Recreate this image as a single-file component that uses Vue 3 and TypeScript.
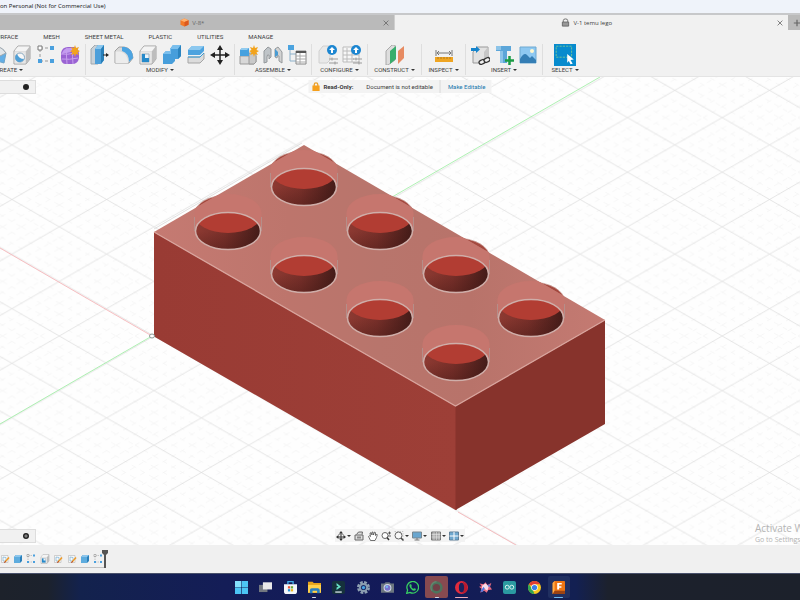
<script setup lang="ts">
interface ToolGroup {
  name: string
  icons: string[]
}

const menus: string[] = ['SURFACE', 'MESH', 'SHEET METAL', 'PLASTIC', 'UTILITIES', 'MANAGE']

const groups: ToolGroup[] = [
  { name: 'CREATE', icons: ['revolve', 'hole', 'pattern', 'form'] },
  { name: 'MODIFY', icons: ['pushPull', 'fillet', 'shell', 'combine', 'split', 'move'] },
  { name: 'ASSEMBLE', icons: ['component', 'joint', 'bom'] },
  { name: 'CONFIGURE', icons: ['configure', 'configTable'] },
  { name: 'CONSTRUCT', icons: ['plane'] },
  { name: 'INSPECT', icons: ['measure'] },
  { name: 'INSERT', icons: ['derive', 'fastener', 'canvas'] },
  { name: 'SELECT', icons: ['select'] },
]

const box =
  '<path d="M2 6L6 1H18V14L14 19H2Z" fill="#d8d8d8" stroke="#a2a2a2"/><path d="M2.500 6.500H13.500V18.500H2.500Z" fill="#e6e6e6"/><path d="M14 6L18 1V14L14 19Z" fill="#bdbdbd"/><path d="M2.500 6L6 1.500H17.500L14 6Z" fill="#f4f4f4"/>'
const star =
  '<path d="M15 0L16 3L19 2L17.500 5L20 6L17.500 7.500L19 10L16 9L15 12L14 9L11 10L12.500 7.500L10 6L12.500 5L11 2L14 3Z" fill="#f2a31c"/>'
const badge =
  '<circle cx="14" cy="5" r="5" fill="#1c86d1"/><path d="M14 2L17 5H15V8H13V5H11Z" fill="#fff"/><path d="M11 14H20M11 18H20M14 12.500V15.500M17 16.500V19.500" stroke="#9b9b9b"/>'

const toolIcons: Record<string, string> = {
  revolve:
    '<path d="M0 5Q12-1 18 8L16 18L9 16Q8 11 0 13Z" fill="#62aee6" stroke="#6ea3c8"/><path d="M0 3Q12-2 18 8L12 11Q8 5 0 7Z" fill="#e1e5e8" stroke="#9aa4ab"/>',
  hole: box + '<circle cx="8" cy="12.500" r="4.500" fill="#f7f7f7" stroke="#8aa9c0"/><path d="M5 9A4.500 4.500 0 1 0 12 14Q7 14 5 9Z" fill="#4f9fd6"/>',
  pattern:
    '<path d="M4 4V17M4 3H16M4 16H16" stroke="#999" fill="none" stroke-dasharray="3 2"/><path d="M2 1H6V5H2Z" fill="#fff" stroke="#777"/><path d="M14 1H18V5H14ZM2 14H6V18H2ZM14 14H18V18H14Z" fill="#4aa0de"/>',
  form:
    '<path d="M1 8Q2 2 8 2H14Q19 3 19 9V13Q18 19 12 19H6Q1 19 1 13Z" fill="#9a63d3"/><path d="M2 8Q4 3 9 3H13L11 7Q6 8 2 9Z" fill="#c39bef"/><path d="M1 9Q8 10 14 8Q17 7 18 6M2 14Q9 15 18 13M7 3Q6 11 7 19M13 3Q12 12 13 19" fill="none" stroke="#c7a0ee"/>' + star,
  pushPull:
    '<path d="M1 4L5 0H11V15L8 19H1Z" fill="#c9d1d7" stroke="#a0a8ae"/><path d="M5 4L8 0H14V15L11 19H5Z" fill="#4c9fda"/><path d="M5 4L8 0H14L11 4Z" fill="#8cc8ef"/><path d="M11 4L14 0V15L11 19Z" fill="#277fb9"/><path d="M13 10H17" stroke="#222"/><path d="M16 8L19 10L16 12Z" fill="#222"/>',
  fillet:
    '<path d="M1 6L5 2H10Q18 3 19 13L15 18H1Z" fill="#d9d9d9" stroke="#a0a0a0"/><path d="M8 2H11Q19 4 19 13L15 17Q15 8 8 6Z" fill="#4ba4e2"/><path d="M1.500 6.500H6Q14 8 14 18H1.500Z" fill="#ececec"/>',
  shell: box + '<path d="M4 9H11V17H4Z" fill="#e8f4fc" stroke="#9fb3c2"/><path d="M4 9H7V13L11 13V17H4Z" fill="#2589ca"/>',
  combine:
    '<path d="M1 9L4 6H8V4L11 0H19V11L16 14H13V16L10 19H1Z" fill="#479edb"/><path d="M1 9L4 6H8V4L11 0H19L16 4H9V9Z" fill="#7bbfed"/><path d="M16 4L19 0V11L16 14Z" fill="#2c84bf"/>',
  split:
    '<path d="M2 5L6 1H18V6L14 10H2Z" fill="#4da3df"/><path d="M2 5L6 1H18L14 5Z" fill="#8cc8ef"/><path d="M2 12H14L18 8V14L14 18H2Z" fill="#dcdcdc" stroke="#a5a5a5"/><path d="M2 12H14L18 8" stroke="#319bd8" fill="none"/>',
  move:
    '<path d="M10 3V17M3 10H17" stroke="#222" stroke-width="1.500"/><path d="M10 0L13 5H7ZM10 20L13 15H7ZM0 10L5 7V13ZM20 10L15 7V13Z" fill="#222"/>',
  component:
    '<path d="M1 11H17V17L15 19H1Z" fill="#d8d8d8" stroke="#9b9b9b"/><path d="M10 8H17V17L15 19H10Z" fill="#c9c9c9" stroke="#999"/><path d="M1 5L3 3H10V11H1Z" fill="#46a1df"/><path d="M1 5L3 3H10L8 5Z" fill="#91cbef"/>' + star,
  joint:
    '<path d="M1 6L5 2L8 4V12L6 14V10Q4 9 4 12V17L1 18Z" fill="#bfc4c8" stroke="#95999c"/><path d="M12 4L15 2L19 7V18L16 16V11Q14 9 14 13L12 12Z" fill="#d2d2d2" stroke="#95999c"/><path d="M12 4L15 7V10L12 12Z" fill="#499bd2"/>',
  bom: '<path d="M1 0H7V5H1Z" fill="#4ba3df"/><path d="M3 5V16H9M3 9H9" stroke="#8db1ca" fill="none"/><path d="M9 6H19V19H9Z" fill="#fff" stroke="#888"/><path d="M9 6H19V8H9Z" fill="#555"/><path d="M9 11H19M9 14H19M9 17H19M13 8V19" stroke="#aaa"/>',
  configure: '<path d="M1 6L5 1H12V15L9 18H1Z" fill="#e9e9e9" stroke="#d0d0d0"/>' + badge,
  configTable: '<path d="M1 2H17V17H1Z" fill="#f7f7f7" stroke="#bbb"/><path d="M1 6H17M1 10H17M1 14H12M5 3V17M10 3V17" stroke="#bbb"/>' + badge,
  plane:
    '<path d="M1 6L7 0H10V15L3 20H1Z" fill="#ddd" stroke="#aaa"/><path d="M5 6L11 1V14L5 19Z" fill="#38ae6c"/><path d="M13 6L19 1V13L13 19Z" fill="#e78b62"/>',
  measure:
    '<path d="M2 5V11M18 5V11M3 8H17M5 6L3 8L5 10M15 6L17 8L15 10" fill="none" stroke="#777"/><path d="M1 12H19V17H1Z" fill="#efa522"/><path d="M4 12V14M7 12V14M10 12V14M13 12V14M16 12V14" stroke="#b47b1b"/>',
  derive:
    '<path d="M3 7L7 2H18V14L15 18H3Z" fill="#e2e2e2" stroke="#999"/><path d="M14 7L18 2V14L14 18Z" fill="#c6c6c6"/><path d="M1 3H6V1L10 4.500L6 8V6H1Z" fill="#1684cc"/><g fill="#f1f1f1" stroke="#333" stroke-width="1.300"><rect x="9" y="15" width="6" height="4" rx="2" transform="rotate(-25 12 17)"/><rect x="14" y="13" width="6" height="4" rx="2" transform="rotate(-25 17 15)"/></g>',
  fastener:
    '<path d="M2 1H17V6H13V18H6V6H2Z" fill="#5ca6d9"/><path d="M2 1H7V5H2ZM6 6H9V18H6Z" fill="#8dc4e8"/><path d="M15.500 11V20M11 15.500H20" stroke="#1a9c45" stroke-width="2.500"/>',
  canvas:
    '<path d="M2 2H18V18H2Z" fill="#8ec8f1" stroke="#6ea9d1"/><circle cx="14" cy="6" r="2" fill="#fff7cf"/><path d="M2 14Q6 7 9 10L12 13L14 11L18 15V18H2Z" fill="#347eb5"/>',
  select:
    '<path d="M0 0H20V20H0Z" fill="#078bce"/><path d="M2 2H16V12H2Z" fill="none" stroke="#8ad18a" stroke-width="0.700" stroke-dasharray="2 1"/><path d="M12 9L18 14L15 14.500L17 18L15 18.500L13.500 15.500L12 17Z" fill="#fff"/>',
}

const timeline: string[] = ['sketch', 'extrude', 'pattern', 'shell', 'sketch', 'sketch', 'extrude', 'pattern']
const timelineIcons: Record<string, string> = {
  sketch: '<path d="M3 3H16V17H3Z" fill="#f8f8f8" stroke="#aaa"/><path d="M6 6V14H12V7Z" fill="none" stroke="#4b97c9"/><path d="M10 16L18 7" stroke="#ef9a25" stroke-width="3"/><path d="M9 18L11 14" stroke="#b4472d" stroke-width="2"/>',
  extrude: '<path d="M2 6L6 2H18V14L14 18H2Z" fill="#2a80bb"/><path d="M2 6H14V18H2Z" fill="#5eacde"/><path d="M2 6L6 2H18L14 6Z" fill="#8dc6ec"/>',
  pattern: toolIcons.pattern,
  shell: toolIcons.shell,
}

interface ViewTool {
  label: string
  icon: string
  menu: boolean
}

const viewTools: ViewTool[] = [
  { label: 'Orbit', menu: true, icon: '<path d="M10 2V18M2 12H18" fill="none" stroke="#333" stroke-width="2"/><path d="M10 0L14 5H6ZM10 20L14 15H6ZM0 12L5 8V16ZM20 12L15 8V16Z" fill="#333"/><path d="M4 8Q10 3 16 8" fill="none" stroke="#777" stroke-width="1.500"/>' },
  { label: 'Look at', menu: false, icon: '<path d="M2 8H18V18H2ZM5 7L9 2H17L16 7" fill="#ddd" stroke="#666" stroke-width="2"/><path d="M6 11H14V15H6Z" fill="#888"/>' },
  { label: 'Pan', menu: false, icon: '<path d="M5 19L1 11Q2 8 5 11L4 4Q6 1 8 8V2Q10-1 11 8L13 2Q16 1 15 9L17 6Q20 6 17 13L14 19Z" fill="#fff" stroke="#444" stroke-width="1.500"/>' },
  { label: 'Zoom', menu: false, icon: '<circle cx="8" cy="9" r="6" fill="#fff" stroke="#666" stroke-width="2"/><path d="M12 13L16 18" stroke="#333" stroke-width="3"/><path d="M17 1V7M14 4H20M14 10H20" stroke="#333" stroke-width="1.500"/>' },
  { label: 'Fit', menu: true, icon: '<path d="M1 1H18V18" fill="none" stroke="#999" stroke-dasharray="3 2"/><circle cx="9" cy="9" r="7" fill="#f7f7f7" stroke="#666" stroke-width="2"/><path d="M14 14L19 19" stroke="#444" stroke-width="3"/>' },
  { label: 'Display settings', menu: true, icon: '<path d="M1 2H19V14H1Z" fill="#69a6cf" stroke="#78868f" stroke-width="2"/><path d="M10 14V18M5 18H15" stroke="#777" stroke-width="2"/>' },
  { label: 'Grid and snaps', menu: true, icon: '<path d="M1 2H19V18H1Z" fill="#aaa" stroke="#777" stroke-width="2"/><path d="M6 2V18M11 2V18M16 2V18M1 7H19M1 12H19" stroke="#eee"/>' },
  { label: 'Viewports', menu: true, icon: '<path d="M1 2H19V18H1Z" fill="#6fa8cf" stroke="#5e7e97" stroke-width="2"/><path d="M10 2V18M1 10H19" stroke="#fff" stroke-width="2"/>' },
]

interface TaskApp {
  label: string
  icon: string
  state: string
}

const apps: TaskApp[] = [
  { label: 'Start', state: '', icon: '<path d="M0 0H9.500V9.500H0ZM10.500 0H20V9.500H10.500ZM0 10.500H9.500V20H0ZM10.500 10.500H20V20H10.500Z" fill="#4cc5f4"/><path d="M0 0H9.500V9.500H0Z" fill="#84e0fc"/>' },
  { label: 'Task view', state: '', icon: '<path d="M0 6H13V17H0Z" fill="#727780"/><path d="M6 2H20V13H6Z" fill="#e9e9e9"/>' },
  { label: 'Store', state: '', icon: '<path d="M6 5V1H14V5" fill="none" stroke="#43afe8" stroke-width="2"/><path d="M0 5H20V16Q20 20 16 20H4Q0 20 0 16Z" fill="#f4f7fa"/><path d="M6 8H9.500V11.500H6Z" fill="#e95536"/><path d="M10.500 8H14V11.500H10.500Z" fill="#69a83a"/><path d="M6 12.500H9.500V16H6Z" fill="#2994d6"/><path d="M10.500 12.500H14V16H10.500Z" fill="#f1b61b"/>' },
  { label: 'Files', state: 'open', icon: '<path d="M0 1H7L9 3H20V18H0Z" fill="#e5a21b"/><path d="M0 6H20V18H0Z" fill="#ffd14c"/><path d="M3 19V14Q3 11 6 11H15Q18 11 18 14V19H14V15H7V19Z" fill="#287fc1"/>' },
  { label: 'Filmora', state: '', icon: '<rect width="20" height="20" rx="3" fill="#15313c"/><path d="M7 3L14 9L7 14V10L10 9L7 7Z" fill="#67e0c7"/><path d="M5 17H15" stroke="#d9e6ea" stroke-width="2"/>' },
  { label: 'Settings', state: '', icon: '<circle cx="10" cy="10" r="8" fill="none" stroke="#8fa1b3" stroke-width="4" stroke-dasharray="4.200 2.080"/><circle cx="10" cy="10" r="7" fill="#8b9eb0"/><circle cx="10" cy="10" r="4" fill="#1a2b68"/><circle cx="10" cy="10" r="2.500" fill="#48a5e3"/>' },
  { label: 'Camera', state: '', icon: '<path d="M0 4H5L7 2H13L15 4H20V18H0Z" fill="#6c7680"/><circle cx="10" cy="10.500" r="6" fill="#d6dce5"/><circle cx="10" cy="10.500" r="4.500" fill="#7870cb"/><circle cx="9" cy="9" r="2" fill="#77b4ed"/>' },
  { label: 'WhatsApp', state: '', icon: '<path d="M1 19L2.500 14A9 9 0 1 1 6 17.500Z" fill="none" stroke="#37cf62" stroke-width="2"/><path d="M6 5L8 5L9 8L8 9Q9 12 12 12L13 11L15 12L15 14Q11 17 7 11Q4 7 6 5Z" fill="#37cf62"/>' },
  { label: 'Opera GX', state: 'alert', icon: '<circle cx="10" cy="10" r="7.500" fill="#713f46" stroke="#4d745d" stroke-width="4"/><path d="M10 1A9 9 0 0 0 3 15" stroke="#64866e" stroke-width="2" fill="none"/>' },
  { label: 'Opera', state: 'running', icon: '<ellipse cx="10" cy="10" rx="10" ry="10" fill="#e32b3c"/><path d="M12 1Q20 3 19 12Q17 19 11 19Q16 10 12 1Z" fill="#b61b30"/><ellipse cx="10" cy="10" rx="4" ry="7.500" fill="#18225c"/>' },
  { label: 'Paint brush', state: '', icon: '<path d="M1 4L7 5L10 2L13 6L19 3L17 9L20 13L14 14L12 18L8 15L2 18L4 12L0 9L4 8Z" fill="#ee6c80"/><path d="M5 7L10 4L15 8L13 15L8 12L4 14Z" fill="#f7dce9"/><path d="M2 16L7 9L9 12L5 17ZM13 7L17 5L16 10Z" fill="#4d78df"/>' },
  { label: 'Arduino', state: '', icon: '<rect width="20" height="20" rx="3" fill="#2b9aa1"/><circle cx="6.500" cy="9.500" r="3" fill="none" stroke="#d9f4f1" stroke-width="1.500"/><circle cx="13.500" cy="9.500" r="3" fill="none" stroke="#d9f4f1" stroke-width="1.500"/>' },
  { label: 'Chrome', state: '', icon: '<circle cx="10" cy="10" r="10" fill="#f8c71f"/><path d="M10 10L1.300 5A10 10 0 0 1 18.700 5H10Z" fill="#e43d31"/><path d="M1.300 5L7 13L10 20A10 10 0 0 1 1.300 5Z" fill="#31a653"/><circle cx="10" cy="10" r="5" fill="#fff"/><circle cx="10" cy="10" r="4" fill="#3b7ee8"/>' },
  { label: 'Fusion', state: 'active', icon: '<path d="M1 3L4 0H19Q20 0 20 2V20H1Z" fill="#ed7513"/><path d="M1 3L4 0V17L1 20Z" fill="#ffad46"/><path d="M4 15H20V20H1Z" fill="#9b4313"/><path d="M8 3H15V5.500H11V8H14.500V10.500H11V13H8Z" fill="#fff"/>' },
]

const studs: [number, number][] = [
  [304, 187],
  [228, 231],
  [380, 231],
  [304, 274],
  [456, 274],
  [380, 318],
  [531, 318],
  [456, 362],
]
</script>

<template>
  <div class="app">
    <header class="title">on Personal (Not for Commercial Use)</header>

    <nav class="documents">
      <div class="doc inactive">
        <svg class="doc-icon" viewBox="0 0 20 20"><path d="M1 5L10 1L19 5V15L10 19L1 15Z" fill="#f37a28" /><path d="M1 5L10 1L19 5L10 9Z" fill="#ffb16f" /><path d="M10 9L19 5V15L10 19Z" fill="#db5920" /></svg>
        <span>V-8*</span>
        <button class="close" aria-label="Close V-8"><svg viewBox="0 0 10 10"><path d="M2 2L8 8M8 2L2 8" /></svg></button>
      </div>
      <div class="doc current">
        <svg class="doc-icon" viewBox="0 0 20 20"><path d="M5 9V6Q5 2 10 2T15 6V9" fill="none" stroke="#666" stroke-width="2" /><path d="M3 9H17V18H3Z" fill="#999" stroke="#666" stroke-width="2" /></svg>
        <span>V-1 temu lego</span>
        <button class="close" aria-label="Close V-1 temu lego"><svg viewBox="0 0 10 10"><path d="M2 2L8 8M8 2L2 8" /></svg></button>
      </div>
      <button class="new-doc" aria-label="New document"><svg viewBox="0 0 10 10"><path d="M5 1V9M1 5H9" /></svg></button>
    </nav>

    <section class="ribbon">
      <div class="menus">
        <button v-for="menu in menus" :key="menu">{{ menu }}</button>
      </div>
      <div class="groups">
        <div v-for="group in groups" :key="group.name" class="group" :class="group.name.toLowerCase()">
          <div class="tools">
            <button v-for="icon in group.icons" :key="icon" class="tool" :aria-label="icon">
              <svg viewBox="0 0 20 20" v-html="toolIcons[icon]"></svg>
            </button>
          </div>
          <button class="group-name">{{ group.name }}<i class="caret"></i></button>
        </div>
      </div>
    </section>

    <main class="viewport">
      <svg class="scene" viewBox="0 77 800 468" preserveAspectRatio="xMidYMid slice">
        <defs>
          <pattern id="grid" x="154" y="336" width="94.700" height="54.600" patternUnits="userSpaceOnUse">
            <g fill="none" stroke="#f4f4f4" stroke-width="0.800" stroke-dasharray="5 5">
              <path d="M0 10.920L18.940 0M0 21.840L37.880 0M0 32.760L56.820 0M0 43.680L75.760 0M18.940 54.600L94.700 10.920M37.880 54.600L94.700 21.840M56.820 54.600L94.700 32.760M75.760 54.600L94.700 43.680" />
              <path d="M75.760 0L94.700 10.920M56.820 0L94.700 21.840M37.880 0L94.700 32.760M18.940 0L94.700 43.680M0 10.920L75.760 54.600M0 21.840L56.820 54.600M0 32.760L37.880 54.600M0 43.680L18.940 54.600" />
            </g>
            <path d="M0 0L94.700 54.600M0 54.600L94.700 0" fill="none" stroke="#dadada" stroke-width="0.700" />
          </pattern>
          <linearGradient id="roof" x1="0" y1="0" x2="1" y2="0">
            <stop offset="0" stop-color="#c57a72" />
            <stop offset="0.300" stop-color="#bd756c" />
            <stop offset="0.500" stop-color="#b8756c" />
            <stop offset="0.700" stop-color="#b8736a" />
            <stop offset="1" stop-color="#c47a72" />
          </linearGradient>
          <linearGradient id="wall" x1="0" y1="0" x2="1" y2="0">
            <stop offset="0" stop-color="#8e3a32" />
            <stop offset="0.450" stop-color="#79302a" />
            <stop offset="1" stop-color="#421b18" />
          </linearGradient>
          <linearGradient id="wall-shade" x1="0" y1="0" x2="0" y2="1">
            <stop offset="0.500" stop-color="#3a1512" stop-opacity="0" />
            <stop offset="1" stop-color="#3a1512" stop-opacity="0.350" />
          </linearGradient>
          <linearGradient id="left-face" x1="0" y1="0" x2="1" y2="0">
            <stop offset="0" stop-color="#993b34" />
            <stop offset="1" stop-color="#9d3f37" />
          </linearGradient>
          <clipPath id="roof-clip"><path d="M304 145L605 320L455.500 406L154 232Z" /></clipPath>
          <clipPath id="hole-clip"><ellipse rx="32.500" ry="18.500" /></clipPath>
        </defs>
        <rect y="77" width="800" height="468" fill="#fefefe" />
        <rect y="77" width="800" height="468" fill="url(#grid)" />
        <path d="M0 248L152 336M458 512L516 545" stroke="#f6aeb2" stroke-width="0.800" fill="none" />
        <path d="M0 424L152 336M380 204L600 77" stroke="#9aee9f" stroke-width="0.800" fill="none" />

        <path d="M154 229L302 143" stroke="#d4d4d4" stroke-width="0.700" />
        <g v-for="(stud, i) in studs" :key="`rim-${i}`" :transform="`translate(${stud[0]} ${stud[1]})`">
          <ellipse cy="-17" rx="33.500" ry="19" fill="#a4493f" stroke="#c99d97" stroke-width="0.700" />
        </g>
        <path d="M154 232L455.500 406H457V509.500L455.500 510L154 336.500Z" fill="url(#left-face)" />
        <path d="M455.500 406L605 320V424L455.500 510Z" fill="#87332c" />
        <path d="M304 145L605 320L455.500 406L154 232Z" fill="url(#roof)" />
        <g clip-path="url(#roof-clip)">
          <g v-for="(stud, i) in studs" :key="`stud-${i}`" :transform="`translate(${stud[0]} ${stud[1]})`">
            <path d="M-33.500 0V-18A33.500 19 0 0 1 33.500 -18V0Z" fill="#c6766e" />
            <path d="M-33.500 0V-14M33.500 0V-14" stroke="#b58e89" />
          </g>
        </g>
        <g v-for="(stud, i) in studs" :key="`hole-${i}`" :transform="`translate(${stud[0]} ${stud[1]})`">
          <g clip-path="url(#hole-clip)">
            <ellipse rx="33" ry="19" fill="url(#wall)" />
            <ellipse rx="33" ry="19" fill="url(#wall-shade)" />
            <ellipse cy="-17" rx="34" ry="19" fill="#b23d33" />
          </g>
          <ellipse rx="32.500" ry="18.500" fill="none" stroke="#cfaea9" stroke-width="1.500" />
        </g>
        <path d="M154 232L455.500 406L605 320" fill="none" stroke="#d8a39c" stroke-width="1.300" />
        <ellipse cx="152" cy="336" rx="2.500" ry="2" fill="#fff" stroke="#8a9995" />
      </svg>

      <aside class="panel top"><button aria-label="Collapse browser"><svg viewBox="0 0 10 10"><circle cx="5" cy="5" r="5" /></svg></button></aside>
      <aside class="panel bottom"><button aria-label="Expand comments"><svg viewBox="0 0 10 10"><circle cx="5" cy="5" r="5" /><path d="M2 5H8M5 2V8" /></svg></button></aside>

      <div class="notice">
        <svg class="lock" viewBox="0 0 10 10"><path d="M3 5V3Q3 1 5 1T7 3V5" fill="none" stroke="#eaa02a" stroke-width="1.500" /><path d="M1 4H9V10H1Z" fill="#f5a01d" /></svg>
        <strong>Read-Only:</strong>
        <span class="reason">Document is not editable</span>
        <a href="#editable">Make Editable</a>
      </div>

      <div class="view-tools">
        <button v-for="tool in viewTools" :key="tool.label" :aria-label="tool.label">
          <svg viewBox="0 0 20 20" v-html="tool.icon"></svg>
          <i v-if="tool.menu" class="caret"></i>
        </button>
      </div>

      <div class="watermark">
        <p class="headline">Activate Windows</p>
        <p class="detail">Go to Settings to activate Windows.</p>
      </div>
    </main>

    <section class="timeline">
      <div class="features">
        <button v-for="(feature, i) in timeline" :key="i" :aria-label="feature">
          <svg viewBox="0 0 20 20" v-html="timelineIcons[feature]"></svg>
        </button>
      </div>
      <svg class="marker" viewBox="0 0 8 18"><path d="M1 0H7V3L5 5V18H3V5L1 3Z" fill="#555" /></svg>
    </section>

    <footer class="taskbar">
      <div class="apps">
        <button v-for="app in apps" :key="app.label" :class="app.state" :aria-label="app.label">
          <svg viewBox="0 0 20 20" v-html="app.icon"></svg>
        </button>
      </div>
    </footer>
  </div>
</template>

<style>
body {
  margin: 0;
}
</style>

<style scoped>
.app {
  display: flex;
  flex-direction: column;
  height: 100vh;
  overflow: hidden;
  background: #f1f1f1;
  color: #3c3c3c;
  font: 6px/8px Roboto, "Liberation Sans", sans-serif;
}
.app * {
  box-sizing: border-box;
}
button {
  border: 0;
  padding: 0;
  background: none;
  color: inherit;
  font: inherit;
}
svg {
  display: block;
}
.title {
  height: 13px;
  background: #eff3fa;
  color: #111;
  font-family: "Open Sans", "Liberation Sans", sans-serif;
  line-height: 13px;
  white-space: nowrap;
}
.documents {
  display: flex;
  height: 17px;
  border-top: 2px solid #c7c8ca;
  background: #f1f1f1;
  font-family: "Open Sans", "Liberation Sans", sans-serif;
}
.doc {
  position: relative;
  display: flex;
  flex: 1;
  align-items: center;
  justify-content: center;
  gap: 3px;
  padding-right: 9px;
}
.inactive {
  border-right: 1px solid #cfcfcf;
  background: #bababa;
  color: #666;
}
.doc-icon {
  width: 9px;
  height: 9px;
}
.close {
  position: absolute;
  right: 4px;
}
.close svg {
  width: 8px;
  height: 8px;
  stroke: #666;
}
.new-doc {
  width: 12px;
  overflow: hidden;
  background: #bababa;
}
.new-doc svg {
  width: 8px;
  height: 8px;
  margin-left: 5px;
  stroke: #666;
  stroke-width: 1.5;
}
.ribbon {
  height: 47px;
  overflow: hidden;
  border-bottom: 1px solid #e4e4e4;
  background: #f1f1f1;
}
.menus {
  display: flex;
  gap: 25px;
  height: 14px;
  margin-left: -7px;
}
.groups {
  display: grid;
  grid-template-columns: 152px 149px 77px 56px 54px 44px 77px 44px;
  height: 31px;
  margin-left: -66px;
}
.group {
  display: flex;
  flex-direction: column;
  align-items: center;
  border-right: 1px solid #dedede;
}
.group.select {
  border: 0;
}
.tools {
  display: flex;
  gap: 4px;
  height: 22px;
  align-items: center;
}
.create .tools {
  align-self: flex-end;
  padding-right: 5px;
}
.tool svg {
  width: 20px;
  height: 20px;
}
.select .tool svg {
  width: 22px;
  height: 22px;
}
.group-name {
  height: 8px;
  white-space: nowrap;
}
.caret {
  display: inline-block;
  margin-left: 2px;
  border: 2px solid transparent;
  border-top-color: #333;
  border-bottom: 0;
  vertical-align: middle;
}
.viewport {
  position: relative;
  flex: 1;
  min-height: 0;
  overflow: hidden;
}
.scene {
  width: 100%;
  height: 100%;
}
.panel {
  position: absolute;
  left: 0;
  display: flex;
  align-items: center;
  justify-content: flex-end;
  width: 36px;
  height: 14px;
  padding-right: 6px;
  border: 1px solid #dddddd;
  border-left: 0;
  background: #f1f1f1;
}
.panel.top {
  top: 3px;
}
.panel.bottom {
  bottom: 2px;
}
.panel svg {
  width: 6px;
  height: 6px;
  fill: #222;
  stroke: #ddd;
}
.panel circle {
  stroke: none;
}
.notice {
  position: absolute;
  top: 3px;
  left: 50%;
  display: flex;
  align-items: center;
  height: 13px;
  padding: 0 6px 0 3px;
  background: #f3f3f3;
  white-space: nowrap;
  transform: translateX(-50%);
}
.lock {
  width: 9px;
  height: 9px;
  margin-right: 3px;
}
.reason {
  margin-left: 13px;
  padding-right: 7px;
  border-right: 1px solid #dadada;
  line-height: 13px;
}
.notice a {
  margin-left: 7px;
  color: #1677ac;
  text-decoration: none;
}
.view-tools {
  position: absolute;
  bottom: 3px;
  left: 50%;
  display: flex;
  justify-content: space-between;
  width: 130px;
  height: 13px;
  padding: 0 1px;
  background: #f3f3f3;
  transform: translateX(-50%);
}
.view-tools button {
  display: flex;
  align-items: center;
}
.view-tools svg {
  width: 10px;
  height: 10px;
}
.view-tools .caret {
  margin-left: 1px;
}
.watermark {
  position: absolute;
  bottom: 0;
  left: calc(100% - 45px);
  color: #b4b4b4;
  font-family: "Open Sans", "Liberation Sans", sans-serif;
  white-space: nowrap;
}
.watermark p {
  margin: 0;
}
.headline {
  font-size: 10px;
  line-height: 14px;
}
.detail {
  font-size: 7px;
  line-height: 10px;
}
.timeline {
  display: flex;
  height: 28px;
  padding-top: 5px;
  background: #f0f0f0;
}
.features {
  display: grid;
  grid-template-columns: repeat(8, 1fr);
  width: 107px;
  height: 18px;
  margin-left: -2px;
  border-bottom: 1px solid #c2c2c2;
}
.features button {
  display: flex;
  justify-content: center;
  align-items: center;
}
.features svg {
  width: 10px;
  height: 10px;
}
.marker {
  width: 8px;
  height: 18px;
  margin-left: -4px;
}
.taskbar {
  height: 27px;
  border-top: 1px solid #48506a;
  background: linear-gradient(90deg, #1d222b 0, #1c222d 6%, #13224d 10%, #141d57 28%, #131a59 50%, #132052 72%, #1c212d 76%, #1c212b 100%);
}
.apps {
  display: grid;
  grid-template-columns: repeat(14, 1fr);
  width: 342px;
  height: 26px;
  margin: 0 auto;
}
.apps button {
  position: relative;
  display: flex;
  align-items: center;
  justify-content: center;
  margin: 2px 1px;
  border-radius: 2px;
}
.apps svg {
  width: 13px;
  height: 13px;
}
.apps .alert {
  background: #874a50;
}
.apps .active {
  background: #202f60;
}
.apps .open::after,
.apps .alert::after,
.apps .running::after,
.apps .active::after {
  position: absolute;
  bottom: 0;
  width: 4px;
  height: 1px;
  border-radius: 1px;
  background: #d8dce8;
  content: "";
}
.apps .running::after {
  width: 13px;
  background: #efacb9;
}
.apps .active::after {
  width: 9px;
  background: #6dbbf0;
}
</style>
